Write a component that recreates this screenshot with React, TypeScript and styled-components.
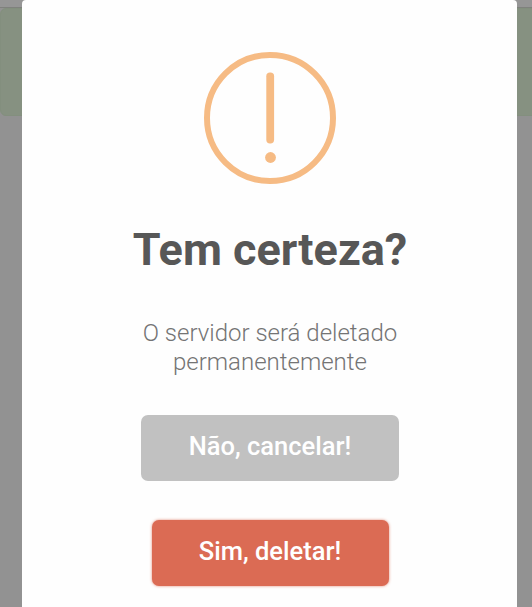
import React from "react";
import styled, { createGlobalStyle } from "styled-components";

const GlobalStyle = createGlobalStyle`
  * { box-sizing: border-box; }
  body { margin: 0; overflow: hidden; font-family: Roboto, sans-serif; background: #929292; }
`;

const Screen = styled.div`
  display: grid;
  grid-template: 607px / 532px;
  width: 532px;
  height: 607px;
  overflow: hidden;
`;

const Page = styled.div`
  grid-area: 1 / 1;
  background: #929292;
`;

const TopBar = styled.div`
  height: 8px;
  border-bottom: 1px solid #7f817d;
  background: #969696;
`;

const SuccessAlert = styled.div`
  width: 560px;
  height: 108px;
  border: 1px solid #838f7e;
  border-radius: 6px;
  background: #869181;
`;

const Dialog = styled.section`
  grid-area: 1 / 1;
  z-index: 1;
  width: 495px;
  height: 607px;
  margin-left: 22px;
  padding: 51px 0 0 1px;
  display: flex;
  flex-direction: column;
  align-items: center;
  border-radius: 4px 4px 0 0;
  background: #fefefe;
`;

const WarningIcon = styled.svg`
  display: block;
  width: 134px;
  height: 134px;
  flex: none;
`;

const Title = styled.h2`
  margin: 39px 0 0;
  font-size: 45px;
  line-height: 52px;
  font-weight: 700;
  color: #575757;
  white-space: nowrap;
`;

const Message = styled.p`
  width: 300px;
  margin: 43px 0 0;
  font-size: 24px;
  line-height: 29px;
  font-weight: 300;
  text-align: center;
  color: #747474;
`;

const Actions = styled.div`
  margin-top: 38px;
  display: flex;
  flex-direction: column;
  align-items: center;
  gap: 39px;
`;

const Button = styled.button<{ $danger?: boolean }>`
  width: ${(p) => (p.$danger ? 237 : 258)}px;
  height: 66px;
  padding: 0 0 4px;
  border: 0;
  border-radius: 7px;
  font-family: inherit;
  font-size: 25.5px;
  font-weight: 500;
  color: #fff;
  background: ${(p) => (p.$danger ? "#db6b54" : "#c1c1c1")};
  box-shadow: ${(p) => (p.$danger ? "0 0 3px rgba(219, 107, 84, 0.8)" : "none")};
`;

export default function App() {
  return (
    <>
      <GlobalStyle />
      <Screen>
        <Page>
          <TopBar />
          <SuccessAlert />
        </Page>
        <Dialog role="alertdialog" aria-labelledby="title">
          <WarningIcon viewBox="0 0 134 134" aria-hidden="true">
            <circle cx="67" cy="67" r="63" fill="none" stroke="#f6bb84" strokeWidth="6" />
            <rect x="63.3" y="21.5" width="7.8" height="71" rx="3.7" fill="#f6bb84" />
            <circle cx="67.5" cy="106.5" r="5.4" fill="#f6bb84" />
          </WarningIcon>
          <Title id="title">Tem certeza?</Title>
          <Message>O servidor será deletado permanentemente</Message>
          <Actions>
            <Button type="button">Não, cancelar!</Button>
            <Button type="button" $danger>Sim, deletar!</Button>
          </Actions>
        </Dialog>
      </Screen>
    </>
  );
}
